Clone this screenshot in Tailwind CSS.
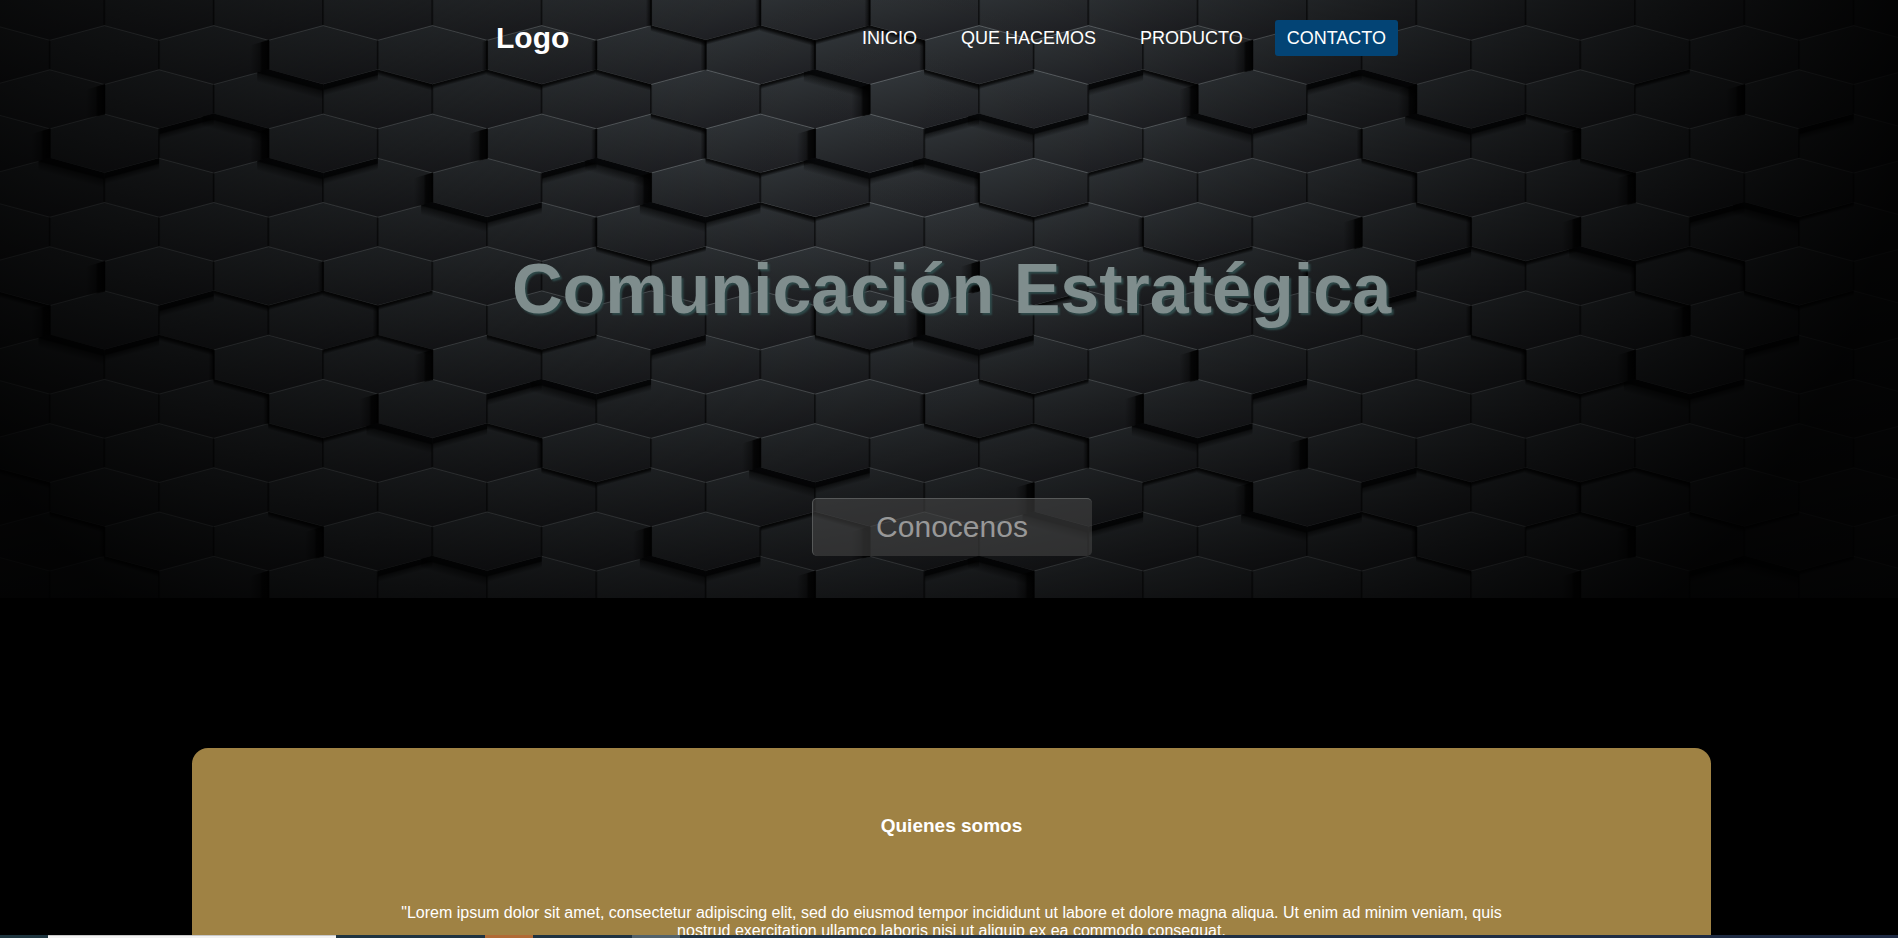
<!DOCTYPE html>
<html lang="es">
<head>
<meta charset="utf-8">
<meta name="viewport" content="width=device-width, initial-scale=1">
<title>Comunicación Estratégica</title>
<script src="https://cdn.jsdelivr.net/npm/@tailwindcss/browser@4"></script>
</head>
<body class="flex h-screen flex-col bg-black font-['Liberation_Sans',Arial,sans-serif] text-white">
<div class="min-h-0 flex-1 overflow-hidden">
  <div class="relative isolate flex h-[598px] flex-col overflow-hidden">
    <svg class="absolute inset-0 -z-10 h-full w-full" viewBox="0 0 1898 598" preserveAspectRatio="xMidYMid slice" aria-hidden="true">
      <defs>
        <linearGradient id="face" x1="0.2" y1="0" x2="0.6" y2="1">
          <stop offset="0" stop-color="#32373b"/><stop offset="0.5" stop-color="#292c2f"/><stop offset="1" stop-color="#1f2024"/>
        </linearGradient>
        <linearGradient id="gl1" gradientUnits="userSpaceOnUse" x1="-54" y1="0" x2="-60" y2="0">
          <stop offset="0" stop-color="#000" stop-opacity="0.85"/><stop offset="1" stop-color="#000" stop-opacity="0"/>
        </linearGradient>
        <linearGradient id="gl2" gradientUnits="userSpaceOnUse" x1="-54" y1="0" x2="-73" y2="0">
          <stop offset="0" stop-color="#000" stop-opacity="0.95"/><stop offset="0.38" stop-color="#000" stop-opacity="0.8"/><stop offset="0.5" stop-color="#000" stop-opacity="0.42"/><stop offset="1" stop-color="#000" stop-opacity="0"/>
        </linearGradient>
        <linearGradient id="gb1" gradientUnits="userSpaceOnUse" x1="-27.3" y1="51.6" x2="-29" y2="57.6">
          <stop offset="0" stop-color="#000" stop-opacity="0.95"/><stop offset="0.35" stop-color="#000" stop-opacity="0.75"/><stop offset="1" stop-color="#000" stop-opacity="0"/>
        </linearGradient>
        <linearGradient id="gb2" gradientUnits="userSpaceOnUse" x1="-27.3" y1="51.6" x2="-31.3" y2="66.3">
          <stop offset="0" stop-color="#07080a"/><stop offset="0.36" stop-color="#040506" stop-opacity="0.95"/><stop offset="0.46" stop-color="#000" stop-opacity="0.55"/><stop offset="1" stop-color="#000" stop-opacity="0"/>
        </linearGradient>
        <linearGradient id="gr1" gradientUnits="userSpaceOnUse" x1="27.3" y1="51.6" x2="28.6" y2="56.4">
          <stop offset="0" stop-color="#000" stop-opacity="0.95"/><stop offset="0.4" stop-color="#000" stop-opacity="0.7"/><stop offset="1" stop-color="#000" stop-opacity="0"/>
        </linearGradient>
        <linearGradient id="gr2" gradientUnits="userSpaceOnUse" x1="27.3" y1="51.6" x2="30.3" y2="62.6">
          <stop offset="0" stop-color="#07080a"/><stop offset="0.42" stop-color="#040506" stop-opacity="0.95"/><stop offset="0.54" stop-color="#000" stop-opacity="0.5"/><stop offset="1" stop-color="#000" stop-opacity="0"/>
        </linearGradient>
        <radialGradient id="dim" gradientUnits="userSpaceOnUse" cx="0" cy="0" r="1" gradientTransform="translate(890 90) scale(1010 800)">
          <stop offset="0" stop-color="#000" stop-opacity="0"/><stop offset="0.2" stop-color="#000" stop-opacity="0.06"/><stop offset="0.4" stop-color="#000" stop-opacity="0.27"/><stop offset="0.6" stop-color="#000" stop-opacity="0.48"/><stop offset="0.8" stop-color="#000" stop-opacity="0.7"/><stop offset="1" stop-color="#000" stop-opacity="0.92"/>
        </radialGradient>
        <g id="hex">
          <path d="M0 0L54.7 14.7V44.2L0 59L-54.7 44.2V14.7Z" fill="url(#face)"/>
          <path d="M-54.7 14.7V44.2M54.7 14.7V44.2" stroke="#000" stroke-opacity="0.35" stroke-width="2" fill="none"/>
          <path d="M-54.7 15L0 0.3L54.7 15" stroke="#8c9296" stroke-opacity="0.5" stroke-width="1" fill="none"/>
        </g>
        <path id="L1" d="M-54 15V45L-61 46V17Z" fill="url(#gl1)"/>
        <path id="L2" d="M-54 14.5V45L-74 50V20.5Z" fill="url(#gl2)"/>
        <path id="B1" d="M-55 44.2L0 59V66L-55 51Z" fill="url(#gb1)"/>
        <path id="B2" d="M-54.7 44L0 59V76L-66 57V47Z" fill="url(#gb2)"/>
        <path id="R1" d="M0 59L54.7 44.2V50L0 65Z" fill="url(#gr1)"/>
        <path id="R2" d="M0 59L54.7 44.2V56L0 71Z" fill="url(#gr2)"/>
      </defs>
      <g id="tiles"></g>
      <rect width="1898" height="598" fill="url(#dim)"/>
    </svg>

    <header class="flex justify-center pt-5 pr-1">
      <div class="flex w-full max-w-[902px] items-center justify-between">
        <a href="#" class="text-[30px] leading-8 font-bold">Logo</a>
        <nav class="flex gap-5 text-[18px] leading-5">
          <a href="#inicio" class="rounded-[3px] px-3 py-2">INICIO</a>
          <a href="#hacemos" class="rounded-[3px] px-3 py-2">QUE HACEMOS</a>
          <a href="#producto" class="rounded-[3px] px-3 py-2">PRODUCTO</a>
          <a href="#contacto" class="rounded-[3px] bg-[#034475] px-3 py-2">CONTACTO</a>
        </nav>
      </div>
    </header>

    <div class="flex flex-1 flex-col items-center pt-[193px] pl-[5px]">
      <h1 class="text-center text-[70px] leading-20 font-bold text-[#7f8d8d] text-shadow-[2px_2px_2px_#2f4a4a]">Comunicación Estratégica</h1>
      <button type="button" class="mt-[169px] h-[58px] w-[280px] rounded-[5px] border-t border-l border-[#666868]/70 bg-[#484848]/55 pb-0.5 text-[30px] leading-8 text-[#989898]">Conocenos</button>
    </div>
  </div>

  <main class="mt-[150px] pl-[5px]">
    <section class="mx-auto flex w-[80.2%] flex-col items-center rounded-t-2xl bg-[#9f8244] px-[200px] pt-[66px] pb-16 text-center">
      <h2 class="text-[19px] leading-6 font-bold">Quienes somos</h2>
      <p class="mt-[66px] text-base leading-[18px]">"Lorem ipsum dolor sit amet, consectetur adipiscing elit, sed do eiusmod tempor incididunt ut labore et dolore magna aliqua. Ut enim ad minim veniam, quis nostrud exercitation ullamco laboris nisi ut aliquip ex ea commodo consequat.</p>
    </section>
  </main>
</div>

<footer class="flex h-[3px] shrink-0 bg-linear-to-r from-[#1f3640] to-[#1f2b45]" aria-hidden="true">
  <div class="ml-12 w-[288px] border-t border-[#c8c8c8] bg-[#f2f2f2]"></div>
  <div class="ml-[149px] w-12 bg-[#b06a35]"></div>
  <div class="ml-[99px] w-12 bg-[#52626b]"></div>
</footer>

<script>
  // Raised tiles, one line per row: column:LBR, the depth (0-2) of the left, bottom-left and bottom-right shadows.
  const rows = [
    "6:111 7:111 8:110",
    "2:222 3:011 4:111 5:110 6:101 7:120 8:111 9:002 10:010 11:202 12:020 14:001",
    "1:202 2:020 6:010 8:202 9:022 11:222 13:222 14:010 16:202",
    "0:222 2:222 4:202 5:120 6:111 7:222 8:020 9:001 12:110 14:210",
    "4:222 6:222 7:011 9:111 13:110 15:202 16:021",
    "5:111 10:111 12:202 13:111 14:221 15:010",
    "0:010 1:202 2:011 3:111 9:201 12:102 15:110 16:111",
    "0:222 1:010 2:001 3:110 4:011 5:002 7:111 8:222 13:110 15:202",
    "2:110 4:202 5:022 9:011 11:202 14:111 15:222",
    "2:111 3:222 4:010 8:111 9:010 10:222",
    "0:010 5:111 7:222 10:101 11:010 12:202 13:011 14:011 15:010",
    "0:010 2:010 6:001 7:010 9:222 11:222 12:010 13:001 14:110 15:011",
    "1:110 3:202 4:022 6:222 8:202 9:020 13:110 15:202 16:021",
    "2:200 7:200 9:200 14:200"
  ];
  let base = "", shade = "";
  rows.forEach((line, i) => {
    const y = (-18.9 + i * 44.22).toFixed(1);
    const x0 = i % 2 ? 104.5 : 49.8;
    for (let c = -1; c < 18; c++) base += `<use href="#hex" x="${(x0 + c * 109.33).toFixed(1)}" y="${y}"/>`;
    line.split(" ").forEach(item => {
      const [c, depth] = item.split(":");
      const x = (x0 + c * 109.33).toFixed(1);
      ["L", "B", "R"].forEach((side, k) => {
        if (depth[k] !== "0") shade += `<use href="#${side}${depth[k]}" x="${x}" y="${y}"/>`;
      });
    });
  });
  document.getElementById("tiles").innerHTML = base + shade;
</script>
</body>
</html>
